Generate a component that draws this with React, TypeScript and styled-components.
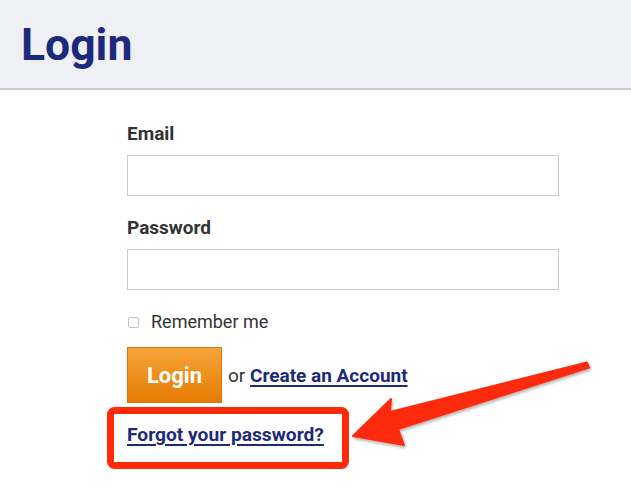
import React, { useState } from "react";
import styled, { createGlobalStyle } from "styled-components";

const GlobalStyle = createGlobalStyle`
  html, body {
    margin: 0;
    padding: 0;
    background: #ffffff;
    font-family: Roboto, "Liberation Sans", Arial, sans-serif;
  }
`;

const Page = styled.div`
  position: relative;
  width: 631px;
  height: 496px;
  overflow: hidden;
`;

const Header = styled.header`
  height: 88px;
  background-color: #eff0f6;
  border-bottom: 2px solid #c9c9cd;
  display: flex;
  align-items: center;
  padding-left: 21px;
`;

const Title = styled.h1`
  margin: 0;
  font-size: 44.5px;
  font-weight: 700;
  color: #1d2a7b;
  line-height: 1;
  padding-top: 2px;
`;

const Form = styled.form`
  width: 432px;
  margin-left: 127px;
  padding-top: 32px;
  display: flex;
  flex-direction: column;
`;

const Label = styled.label`
  font-size: 19px;
  line-height: 24px;
  font-weight: 700;
  color: #333333;
`;

const Input = styled.input`
  box-sizing: border-box;
  width: 100%;
  height: 41px;
  margin: 9px 0 20px;
  border: 1px solid #cccccc;
  border-radius: 0;
  padding: 8px;
  font-size: 16px;
  outline: none;
`;

const RememberRow = styled.label`
  display: flex;
  align-items: center;
  gap: 12px;
  font-size: 18px;
  line-height: 22px;
  color: #333333;
  margin-top: 1px;
  padding-left: 1px;
`;

const Check = styled.input`
  appearance: none;
  margin: 0;
  width: 11px;
  height: 11px;
  border: 1px solid #c4c4c4;
  border-radius: 2px;
  background: #fff;
`;

const Actions = styled.div`
  display: flex;
  align-items: center;
  margin-top: 14px;
  font-size: 19px;
  color: #333333;
`;

const LoginButton = styled.button`
  box-sizing: border-box;
  width: 95px;
  height: 56px;
  border: 1px solid #d07a12;
  background: linear-gradient(#f6a43a, #e67c02);
  color: #ffffff;
  font-family: inherit;
  font-size: 22px;
  font-weight: 700;
  cursor: pointer;
  margin-right: 6px;
`;

const NavLink = styled.a<{ $size?: number }>`
  color: #1d2a7b;
  font-weight: 700;
  font-size: ${(p) => p.$size ?? 19}px;
  text-decoration: underline;
  text-underline-offset: 3px;
  text-decoration-thickness: 2px;
`;

const ForgotRow = styled.div`
  margin-top: 20px;
  line-height: 24px;
`;

const Overlay = styled.svg`
  position: absolute;
  left: 0;
  top: 0;
  pointer-events: none;
`;

function Annotation() {
  return (
    <Overlay width="631" height="496" viewBox="0 0 631 496">
      <defs>
        <filter id="shadow" x="-10%" y="-10%" width="130%" height="140%">
          <feDropShadow dx="1" dy="2" stdDeviation="1.5" floodColor="#000" floodOpacity="0.3" />
        </filter>
      </defs>
      <rect x="110.5" y="410.5" width="235" height="55" rx="4" fill="none" stroke="#fe2a0a" strokeWidth="7" />
      <polygon
        filter="url(#shadow)"
        fill="#fe2a0a"
        stroke="#fe2a0a"
        strokeWidth="2"
        strokeLinejoin="round"
        points="587,362.5 589,367.5 398,429 404,445 353,436 391,399 390,412"
      />
    </Overlay>
  );
}

export default function App() {
  const [remember, setRemember] = useState(false);

  return (
    <Page>
      <GlobalStyle />
      <Header>
        <Title>Login</Title>
      </Header>
      <Form onSubmit={(e) => e.preventDefault()}>
        <Label htmlFor="email">Email</Label>
        <Input id="email" type="email" />
        <Label htmlFor="password">Password</Label>
        <Input id="password" type="password" />
        <RememberRow>
          <Check type="checkbox" checked={remember} onChange={(e) => setRemember(e.target.checked)} />
          Remember me
        </RememberRow>
        <Actions>
          <LoginButton type="submit">Login</LoginButton>
          or&nbsp;<NavLink href="#">Create an Account</NavLink>
        </Actions>
        <ForgotRow>
          <NavLink $size={19.2} href="#">Forgot your password?</NavLink>
        </ForgotRow>
      </Form>
      <Annotation />
    </Page>
  );
}
